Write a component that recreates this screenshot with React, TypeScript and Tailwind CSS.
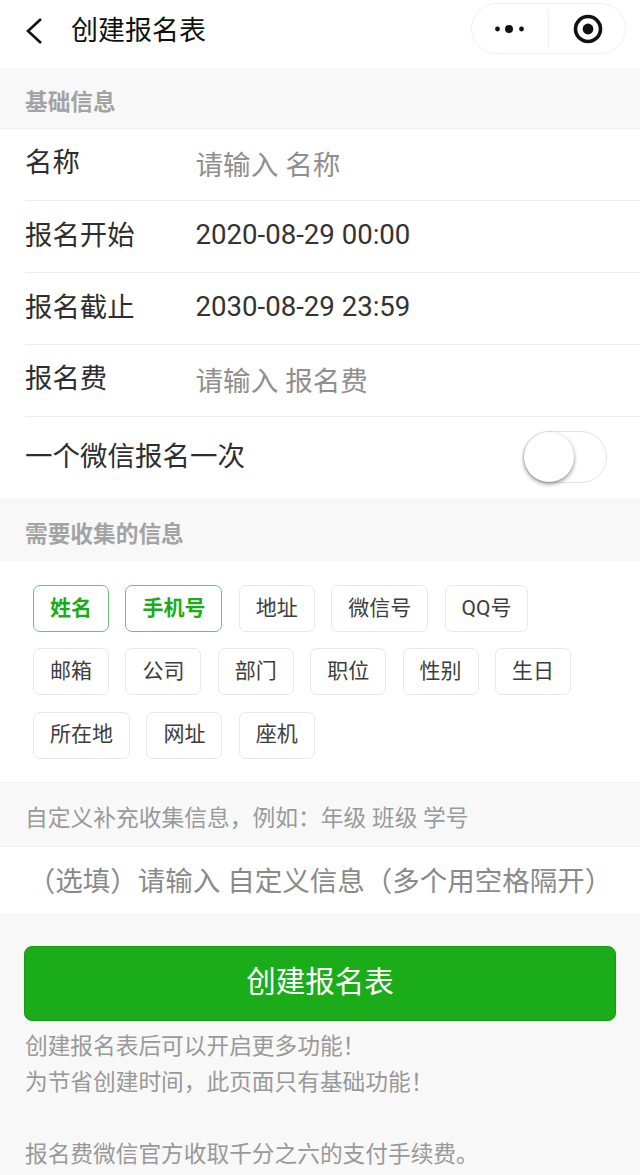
import React from "react";

const font = { fontFamily: '"Roboto", "Noto Sans CJK SC", sans-serif' };

function Section({ title, h, pt }: { title: string; h: string; pt: string }) {
  return (
    <div className={`flex items-center bg-[#f8f8f8] pl-[25px] text-[22.7px] font-bold text-[#a3a3a3] ${h} ${pt}`}>
      {title}
    </div>
  );
}

function Row({ label, value, placeholder }: { label: string; value?: string; placeholder?: boolean }) {
  return (
    <div className="ml-[25px] flex h-[72px] border-b border-[#eeeeee]">
      <div className={`w-[170.5px] text-[27.4px] leading-[40px] text-[#2e2e2e] ${placeholder ? "pt-[14px]" : "pt-[15px]"}`}>{label}</div>
      <div className={`text-[27.6px] leading-[40px] ${placeholder ? "pt-[17px] text-[#8f8f8f]" : "pt-[14px] text-[#333333]"}`}>
        {value}
      </div>
    </div>
  );
}

function Tag({ text, on }: { text: string; on?: boolean }) {
  return (
    <div
      className={`flex h-[47px] items-center rounded-[7px] border px-[16px] text-[21px] ${
        on ? "border-[#6fbf72] font-bold text-[#1aad19]" : "border-[#e8e8e8] text-[#3d3d3d]"
      }`}
    >
      {text}
    </div>
  );
}

export default function App() {
  return (
    <div className="h-[1175px] w-[640px] overflow-hidden bg-[#f8f8f8]" style={font}>
      <header className="flex h-[68px] items-center justify-between bg-white pb-[6px] pl-[25px] pr-[14px]">
        <div className="flex items-center">
          <svg width="18" height="28" viewBox="0 0 18 28" fill="none" stroke="#111111" strokeWidth="2.6">
            <path d="M16 2 L3 14 L16 26" />
          </svg>
          <span className="ml-[28px] text-[27px] text-[#111111]">创建报名表</span>
        </div>
        <div className="mb-[5px] flex h-[51px] w-[155px] items-center rounded-full border border-[#f1f1f1]">
          <div className="flex flex-1 justify-center">
            <svg width="32" height="10" viewBox="0 0 32 10" fill="#111111">
              <circle cx="3.5" cy="5" r="2.4" />
              <circle cx="15" cy="5" r="4" />
              <circle cx="27.5" cy="5" r="2.4" />
            </svg>
          </div>
          <div className="h-[36px] w-px bg-[#eeeeee]" />
          <div className="flex w-[76px] justify-center pl-[1px]">
            <svg width="30" height="30" viewBox="0 0 30 30">
              <circle cx="15" cy="15" r="12.5" fill="none" stroke="#111111" strokeWidth="3.6" />
              <circle cx="15" cy="15" r="5.4" fill="#111111" />
            </svg>
          </div>
        </div>
      </header>

      <Section title="基础信息" h="h-[60px]" pt="pt-[10px]" />
      <div className="border-t border-[#efefef] bg-white">
        <Row label="名称" value="请输入 名称" placeholder />
        <Row label="报名开始" value="2020-08-29 00:00" />
        <Row label="报名截止" value="2030-08-29 23:59" />
        <Row label="报名费" value="请输入 报名费" placeholder />
        <div className="flex h-[81px] items-center justify-between pb-[1px] pl-[25px] pr-[33px]">
          <span className="text-[27.5px] text-[#2e2e2e]">一个微信报名一次</span>
          <div className="relative h-[52px] w-[84px] rounded-full border border-[#e3e3e3] bg-white">
            <div className="absolute left-0 top-0 h-[50px] w-[50px] rounded-full bg-white shadow-[0_2px_4px_rgba(0,0,0,0.45)]" />
          </div>
        </div>
      </div>

      <Section title="需要收集的信息" h="h-[63px]" pt="pt-[12px]" />
      <div className="flex h-[221px] flex-col gap-[16.3px] bg-white pl-[33px] pt-[24px]">
        <div className="flex gap-[16.4px]">
          <Tag text="姓名" on />
          <Tag text="手机号" on />
          <Tag text="地址" />
          <Tag text="微信号" />
          <Tag text="QQ号" />
        </div>
        <div className="flex gap-[16.4px]">
          <Tag text="邮箱" />
          <Tag text="公司" />
          <Tag text="部门" />
          <Tag text="职位" />
          <Tag text="性别" />
          <Tag text="生日" />
        </div>
        <div className="flex gap-[16.4px]">
          <Tag text="所在地" />
          <Tag text="网址" />
          <Tag text="座机" />
        </div>
      </div>

      <div className="flex h-[64px] items-center border-t border-[#f1f1f1] pl-[25px] pt-[9px] text-[22.75px] text-[#9a9a9a]">
        自定义补充收集信息，例如：年级 班级 学号
      </div>
      <div className="flex h-[69px] items-center justify-center border-y border-[#f1f1f1] bg-white pt-[2px] text-[27.5px] text-[#8a8a8a]">
        （选填）请输入 自定义信息（多个用空格隔开）
      </div>

      <div className="mx-[24px] mt-[31px] flex h-[75px] items-center justify-center rounded-[8px] border border-[#179b16] bg-[#1aad19] pb-[3px] text-[29.5px] text-white">
        创建报名表
      </div>
      <div className="mt-[8px] pl-[25px] text-[22.7px] leading-[36px] text-[#999999]">
        <div>创建报名表后可以开启更多功能！</div>
        <div>为节省创建时间，此页面只有基础功能！</div>
        <div className="mt-[36px]">报名费微信官方收取千分之六的支付手续费。</div>
      </div>
    </div>
  );
}
